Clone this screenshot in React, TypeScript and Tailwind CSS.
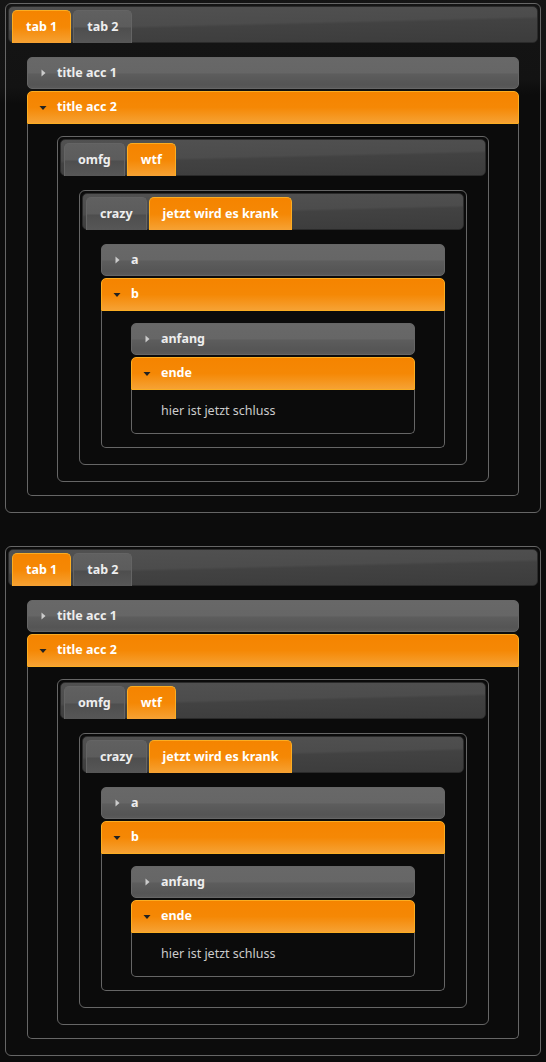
import React from "react";

type AccItem = { title: string; open?: boolean; content?: React.ReactNode };

function Arrow({ open }: { open?: boolean }) {
  return open ? (
    <svg width="8" height="8" viewBox="0 0 8 8" className="shrink-0">
      <path d="M0.5 2 L7.5 2 L4 6 Z" fill="#222222" />
    </svg>
  ) : (
    <svg width="8" height="8" viewBox="0 0 8 8" className="shrink-0">
      <path d="M2.5 0.5 L6.5 4 L2.5 7.5 Z" fill="#cccccc" />
    </svg>
  );
}

function Tabs({
  labels,
  active,
  children,
}: {
  labels: string[];
  active: number;
  children: React.ReactNode;
}) {
  return (
    <div className="rounded-[6px] border border-[#666666] p-[2px]">
      <ul className="flex h-[37px] items-end gap-[2px] rounded-[5px] border border-[#2a2a2a] bg-[linear-gradient(178.6deg,#515151_0%,#4c4c4c_46%,#424242_52%,#3c3c3c_100%)] px-[3px]">
        {labels.map((l, i) =>
          i === active ? (
            <li
              key={l}
              className="-mb-px flex h-[33px] items-center rounded-t-[5px] border border-b-0 border-[#fbad22] bg-[linear-gradient(180deg,#f58400_0%,#f58805_50%,#f6a234_100%)] px-[13px] pt-[1px] text-[12.5px] font-bold text-white"
            >
              {l}
            </li>
          ) : (
            <li
              key={l}
              className="-mb-px flex h-[33px] items-center rounded-t-[5px] border border-b-0 border-[#646464] bg-[linear-gradient(180deg,#606060_0%,#5c5c5c_50%,#4e4e4e_53%,#575757_100%)] px-[13px] pt-[1px] text-[12.5px] font-bold text-[#eeeeee]"
            >
              {l}
            </li>
          )
        )}
      </ul>
      <div className="px-[19px] pb-[14px] pt-[14px]">{children}</div>
    </div>
  );
}

function Accordion({ items }: { items: AccItem[] }) {
  return (
    <div className="flex flex-col gap-[2px]">
      {items.map((it) =>
        it.open ? (
          <div key={it.title} className="flex flex-col">
            <div className="flex h-[33px] items-center rounded-t-[5px] border border-[#fbad22] bg-[linear-gradient(180deg,#f58400_0%,#f58805_50%,#f6a234_100%)] pl-[11px] text-[12.5px] font-bold text-white">
              <Arrow open />
              <span className="ml-[10px]">{it.title}</span>
            </div>
            <div className="rounded-b-[5px] border border-t-0 border-[#666666] bg-[#0b0b0b] px-[29px] pb-[13px] pt-[12px]">
              {it.content}
            </div>
          </div>
        ) : (
          <div
            key={it.title}
            className="flex h-[32px] items-center rounded-[5px] border border-[#666666] bg-[linear-gradient(180deg,#686868_0%,#666666_50%,#5d5d5d_53%,#555555_88%,#595959_100%)] pl-[11px] text-[12.5px] font-bold text-[#eeeeee]"
          >
            <Arrow />
            <span className="ml-[10px]">{it.title}</span>
          </div>
        )
      )}
    </div>
  );
}

function Widget() {
  return (
    <Tabs labels={["tab 1", "tab 2"]} active={0}>
      <Accordion
        items={[
          { title: "title acc 1" },
          {
            title: "title acc 2",
            open: true,
            content: (
              <Tabs labels={["omfg", "wtf"]} active={1}>
                <Tabs labels={["crazy", "jetzt wird es krank"]} active={1}>
                  <Accordion
                    items={[
                      { title: "a" },
                      {
                        title: "b",
                        open: true,
                        content: (
                          <Accordion
                            items={[
                              { title: "anfang" },
                              {
                                title: "ende",
                                open: true,
                                content: (
                                  <p className="text-[12.5px] leading-[18px] text-[#cccccc]">
                                    hier ist jetzt schluss
                                  </p>
                                ),
                              },
                            ]}
                          />
                        ),
                      },
                    ]}
                  />
                </Tabs>
              </Tabs>
            ),
          },
        ]}
      />
    </Tabs>
  );
}

export default function App() {
  return (
    <div className="min-h-[1062px] w-[546px] bg-[linear-gradient(179deg,#151515_0px,#131313_88px,#0c0c0c_104px,#0c0c0c_100%)] px-[5px] pt-[3px] font-['Noto_Sans',sans-serif]">
      <Widget />
      <div className="mt-[33px]">
        <Widget />
      </div>
    </div>
  );
}
